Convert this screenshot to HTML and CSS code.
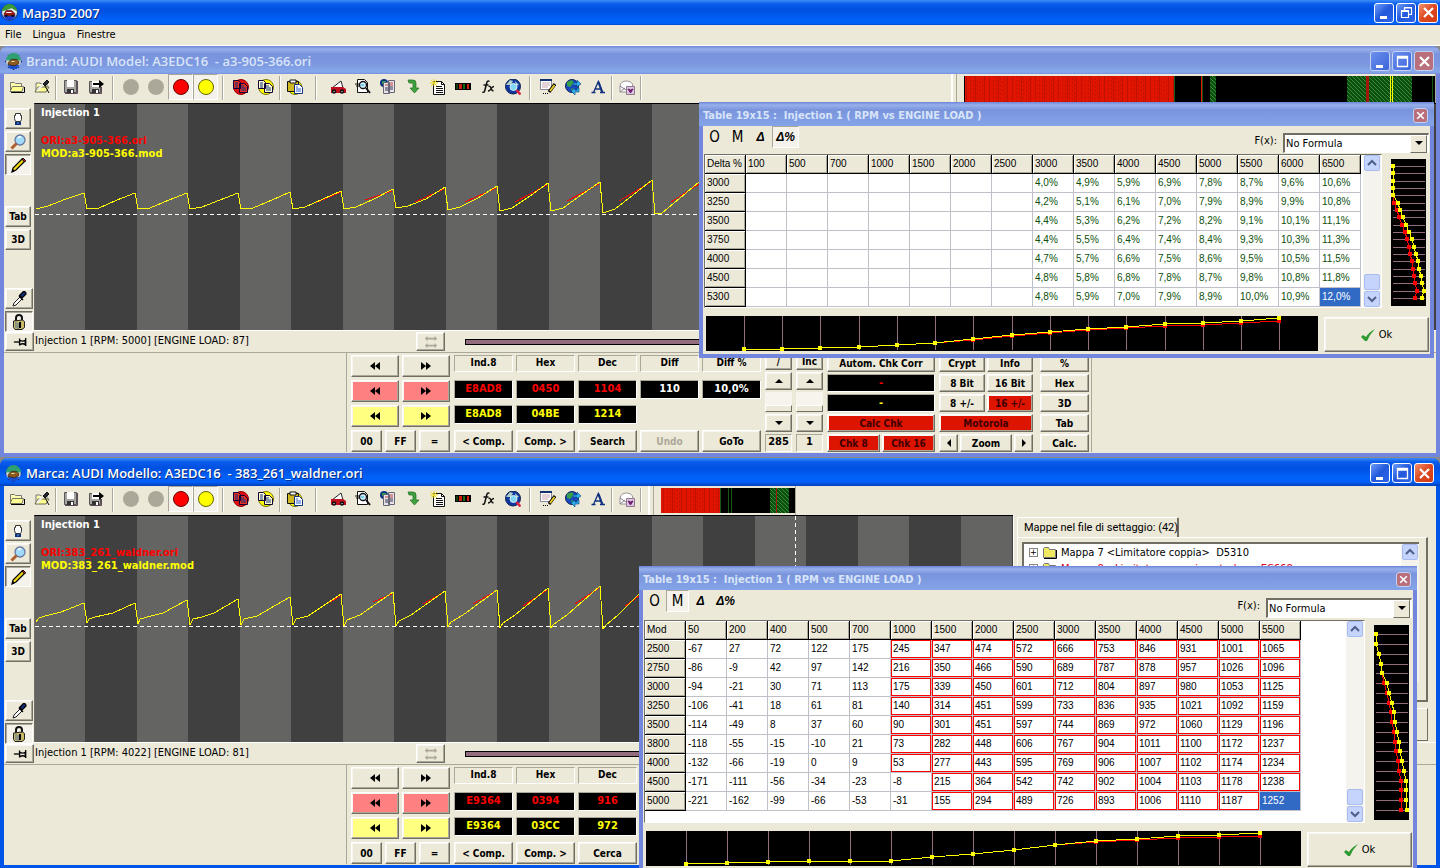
FILE: index.html
```html
<!DOCTYPE html>
<html lang="it">
<head>
    <meta charset="UTF-8">
    <meta name="viewport" content="width=device-width, initial-scale=1.0">
    <title>Map3D 2007</title>
    <link rel="stylesheet" href="styles.css">
</head>
<body>
    <!-- Shared icons -->
    <svg class="icon-defs" aria-hidden="true">
        <defs>
            <pattern id="redStripes" width="23" height="4" patternUnits="userSpaceOnUse">
                <rect width="23" height="4" fill="#e01400"/>
                <path d="M2.500 0v4M11.500 0v4M20.500 0v4" stroke="#c01200"/>
                <path d="M6.500 0v2M9.500 0v2M13.500 1v2M16.500 2v2M18.500 0v2" stroke="#c41400"/>
            </pattern>
            <pattern id="greenMesh" width="4" height="4" patternUnits="userSpaceOnUse">
                <rect width="4" height="4" fill="#0c5010"/>
                <path d="M0 0l4 4M2 -2l4 4M-2 2l4 4" stroke="#3a8a38"/>
            </pattern>
            <marker id="dotY" markerWidth="4" markerHeight="4" refX="2" refY="2" markerUnits="userSpaceOnUse"><rect width="4" height="4" fill="#ff0"/></marker>
            <marker id="dotR" markerWidth="4" markerHeight="4" refX="2" refY="2" markerUnits="userSpaceOnUse"><rect width="4" height="4" fill="#f00"/></marker>
        </defs>
        <symbol id="logo" viewBox="0 0 16 16">
            <circle cx="8" cy="8" r="7.5" fill="#e8eef4" stroke="#1b3c7c"/>
            <path d="M1 7a7 7 0 0 1 14 0l-5-3z" fill="#3a9a3a"/>
            <path d="M2 11h12l-3 4H5z" fill="#1a3fd0"/>
            <path d="M3 9l2-3h5l3 3v2H3z" fill="#a01818" stroke="#300" stroke-width=".6"/>
            <path d="M5 8h5" stroke="#fff"/>
            <path d="M4 11h2M10 11h2" stroke="#000" stroke-width="2"/>
        </symbol>
        <symbol id="logo-child" viewBox="0 0 16 16">
            <path d="M8 0v16M0 8h16M3 2l10 12M13 2L3 14" stroke="#1c2c6c" stroke-width="1.4"/>
            <circle cx="8" cy="8" r="6.8" fill="#e8e8e0"/>
            <path d="M1 7a7 7 0 0 1 14 0z" fill="#2fa070"/>
            <path d="M2 11h12l-3 4H5z" fill="#1a50d0"/>
            <path d="M3 9l3-3h5l2 2v2l-4 2-6-1z" fill="#8a5a20" stroke="#3a2008" stroke-width=".7"/>
            <path d="M6 8h3" stroke="#f0e0b0"/>
        </symbol>
        <symbol id="open" viewBox="0 0 16 16">
            <path d="M1.500 12V3.500h4l1 1h6v3" fill="#ffffb0" stroke="#777"/>
            <path d="M1 12.500l2.500-5h11l-1.500 5z" fill="#ffff90" stroke="#776"/>
            <path d="M15.500 8v5.500H2" stroke="#000" fill="none"/>
        </symbol>
        <symbol id="openedit" viewBox="0 0 16 16">
            <path d="M2 13V4h4l1 1h6v3" fill="#ffffb0" stroke="#777"/>
            <path d="M1 13l3-5h11l-3 5z" fill="#ffff90" stroke="#665"/>
            <path d="M3 12l7-8" stroke="#eee" stroke-width="2"/>
            <path d="M9 5l4-4 2 2-4 4zM11 7l4 7" stroke="#111" fill="#223"/>
        </symbol>
        <symbol id="save" viewBox="0 0 16 16">
            <path d="M1.500 1.500h12v12h-12z" fill="#a8a4a0" stroke="#555"/>
            <path d="M4 1h7v7H4z" fill="#fff"/>
            <path d="M4 10h7v4H4z" fill="#333"/><path d="M8 11h2v3H8z" fill="#fff"/>
            <path d="M14.500 2v12.500H2" stroke="#604858" fill="none"/>
        </symbol>
        <symbol id="saveas" viewBox="0 0 16 16">
            <path d="M1.500 2.500h11v11h-11z" fill="#a8a4a0" stroke="#555"/>
            <path d="M4 2h7v6H4z" fill="#fff"/>
            <path d="M4 10h7v4H4z" fill="#333"/><path d="M8 11h2v3H8z" fill="#fff"/>
            <path d="M13.500 8v6.500H2" stroke="#604858" fill="none"/>
            <path d="M5 4h6V1l5 4-5 4V6H5z" fill="#000"/>
        </symbol>
        <symbol id="gray" viewBox="0 0 16 16"><circle cx="8.500" cy="8.500" r="7.500" fill="#fff"/><circle cx="8" cy="8" r="8" fill="#aca899"/></symbol>
        <symbol id="red" viewBox="0 0 16 16"><circle cx="8" cy="8" r="7.500" fill="#f00" stroke="#600"/></symbol>
        <symbol id="yellow" viewBox="0 0 16 16"><circle cx="8" cy="8" r="7.500" fill="#ff0" stroke="#660"/></symbol>
        <symbol id="copyred" viewBox="0 0 16 16">
            <circle cx="8" cy="8" r="7.500" fill="#e01010" stroke="#900"/>
            <path d="M.5 1.500h5l2 2v6h-7zM6.500 4.500h5l3 3v6h-8z" fill="#e83020" stroke="#103"/>
            <path d="M2 4h3M2 6h3M2 8h3M8 7h3M8 9h5M8 11h5" stroke="#103080"/>
        </symbol>
        <symbol id="copyyellow" viewBox="0 0 16 16">
            <circle cx="8" cy="8" r="7.500" fill="#ff0" stroke="#770"/>
            <path d="M.5 1.500h5l2 2v6h-7zM6.500 4.500h5l3 3v6h-8z" fill="#ffffd0" stroke="#103"/>
            <path d="M2 4h3M2 6h3M2 8h3M8 7h3M8 9h5M8 11h5" stroke="#103080"/>
        </symbol>
        <symbol id="paste" viewBox="0 0 16 16">
            <circle cx="8" cy="8.500" r="7" fill="#ff0" stroke="#770"/>
            <path d="M.5 2.500h11v10H.5z" fill="#d0b820" stroke="#111"/>
            <path d="M3 1h6v3H3z" fill="#fff" stroke="#111"/>
            <path d="M7.500 5.500h5l3 3v6h-8z" fill="#fff" stroke="#103080"/>
            <path d="M9 8h2M9 10h5M9 12h5" stroke="#3060d0"/>
        </symbol>
        <symbol id="car" viewBox="0 0 16 16">
            <path d="M2 9l9-7 2 7z" fill="#fff" stroke="#222"/>
            <path d="M1 8h12l3 2v4H1z" fill="#c01020"/>
            <circle cx="4" cy="12.500" r="2.200" fill="#111"/><circle cx="12" cy="12.500" r="2.200" fill="#111"/>
            <path d="M3.500 12.500h1M11.500 12.500h1" stroke="#fff"/>
        </symbol>
        <symbol id="find" viewBox="0 0 16 16">
            <path d="M2.500.5h7l3 3v10h-10z" fill="#fff" stroke="#111"/>
            <path d="M0 5h5M1 7h4" stroke="#111"/>
            <circle cx="8" cy="6" r="3.500" fill="#d0f0ff" stroke="#111" stroke-width="1.300"/>
            <path d="M6 6h3" stroke="#20b0d0"/>
            <path d="M11 9l4 5" stroke="#111" stroke-width="2"/>
        </symbol>
        <symbol id="compare" viewBox="0 0 16 16">
            <circle cx="4" cy="4" r="4" fill="#103080"/><path d="M2 2h4v3H2z" fill="#20a050"/>
            <path d="M3.500 3.500h6v11h-6zM8.500 1.500h6v12h-6z" fill="#e8e4e8" stroke="#667"/>
            <path d="M10 4h3M10 6h3M5 6h3" stroke="#c04040"/><path d="M10 8h3M5 9h3M5 11h3M10 10h3" stroke="#335"/>
        </symbol>
        <symbol id="down" viewBox="0 0 16 16"><path d="M3 1h5q3 0 3 3v5h3l-4.500 5L5 9h3V5q0-1-1-1H4z" fill="#3fa03f" stroke="#1d701d" stroke-width=".7"/></symbol>
        <symbol id="newfile" viewBox="0 0 16 16">
            <path d="M3.500 2.500h8l3 3v10h-11z" fill="#fff" stroke="#111"/><path d="M11.500 2.500v3h3" stroke="#111" fill="none"/>
            <path d="M6 7.500h6M6 9.500h7M6 11.500h7M6 13.500h7" stroke="#111"/>
            <path d="M4 0v7M0 4h8M1 1l6 6M7 1L1 7" stroke="#e8d820"/>
        </symbol>
        <symbol id="strip" viewBox="0 0 16 16"><path d="M0 4h16v7H0z" fill="#000"/><path d="M1 5h2v5H1z" fill="#104010"/><path d="M4 5h3v5H4zM12 5h2v5h-2z" fill="#d02010"/><path d="M8 5h2v5H8z" fill="#107010"/></symbol>
        <symbol id="fx" viewBox="0 0 16 16">
            <path d="M9.500 2.500Q7.500 1 6.700 4L4.800 11.500Q4.200 14 2.500 13M3.500 6h5" fill="none" stroke="#111" stroke-width="1.500"/>
            <path d="M8.500 7.500q1.500-1 2.300 1.500t2.700 3M14 7.500q-2 0-3 2.300t-3 2.200" fill="none" stroke="#111" stroke-width="1.300"/>
        </symbol>
        <symbol id="globefind" viewBox="0 0 16 16">
            <circle cx="8" cy="7.500" r="7.500" fill="#1038a0" stroke="#102050"/>
            <path d="M1 6l4-5 3 1-2 4zM10 2l4 4-3 1z" fill="#b0d0c8"/>
            <circle cx="8.500" cy="8" r="3.500" fill="#80d8f8" stroke="#d8ecf8"/>
            <path d="M11.500 11l4 4.500" stroke="#e02040" stroke-width="2.500"/>
        </symbol>
        <symbol id="notes" viewBox="0 0 16 16">
            <path d="M.5.5h11v10H.5z" fill="#fff" stroke="#88889a"/><path d="M0 1h12" stroke="#103070" stroke-width="2"/>
            <path d="M2 4h8M2 6h8M2 8h6" stroke="#c8a8b0"/>
            <path d="M9 13l6-8" stroke="#000" stroke-width="3.200"/><path d="M10 12l4.500-6" stroke="#f0d020" stroke-width="1.800"/>
            <path d="M3 14.500h1M5 14.500h1M7 14.500h1" stroke="#000"/>
        </symbol>
        <symbol id="globe" viewBox="0 0 16 16">
            <circle cx="7" cy="7" r="6.500" fill="#1848c0" stroke="#102050"/>
            <path d="M2 3l5-2 2 3-4 4-3-1zM6 9l3 1-2 3z" fill="#38a048"/>
            <path d="M8 4h4V1l4 4-4 3V6H8zM14 9v4h-4v3l-4-4 4-3v2h2V9z" fill="#30b0e8" stroke="#084080" stroke-width=".6"/>
        </symbol>
        <symbol id="font" viewBox="0 0 16 16"><path d="M3.500 13.500L8.300 2.500L12.500 13.500M5 10h6M1.500 13.500h4M10 13.500h5" fill="none" stroke="#103080" stroke-width="1.300"/><path d="M8.500 3l3.800 10.500" stroke="#103080" stroke-width="2.200"/></symbol>
        <symbol id="mail" viewBox="0 0 16 16">
            <path d="M1 7q1-5 6.500-5T14 7v6H1z" fill="#fff" stroke="#99919a"/><path d="M1 7l6 4 7-4M1 13l5-4" stroke="#88808a" fill="none"/>
            <path d="M7.500 7.500h8v8h-8z" fill="#dcc4dc" stroke="#907890"/><path d="M9 10l2.500 4 2.500-4-2.500 1z" fill="#702070" stroke="#702070"/>
        </symbol>
        <symbol id="hand" viewBox="0 0 16 16"><path d="M4.500 4.500h1v-2h5v2h1v4l-1 2h-5l-1-3z" fill="#fff" stroke="#333"/><path d="M5 11h6v3H5z" fill="#103080"/><path d="M7 12h2" stroke="#60a0e0"/></symbol>
        <symbol id="magnify" viewBox="0 0 16 16"><circle cx="10" cy="6" r="5" fill="#a0dcfa" stroke="#6878a0" stroke-width="1.300"/><path d="M8 4q2-2 3-1" stroke="#fff" fill="none" stroke-width="1.500"/><path d="M6.500 9.500l-5 5" stroke="#b06030" stroke-width="3"/></symbol>
        <symbol id="pencil" viewBox="0 0 16 16"><path d="M2 15l1-4 9-9 3 2-9 9z" fill="#f0d818" stroke="#000" stroke-width="1.200"/><path d="M12 2l1-1 2.500 2.500-1 1.500z" fill="#e02020" stroke="#000"/><path d="M2 15l1-3 2 2z" fill="#000"/></symbol>
        <symbol id="dropper" viewBox="0 0 16 16"><path d="M2 15l1-3 6-6 2 2-6 6z" fill="#fff" stroke="#222"/><path d="M8 5l4 4M11 7l4-4q0-2.500-2.500-2.500l-4 4z" fill="#123080" stroke="#000" stroke-width="1.300"/></symbol>
        <symbol id="lock" viewBox="0 0 16 16"><path d="M5 8V4q0-3 3-3t3 3v3" fill="none" stroke="#111" stroke-width="2"/><path d="M2.500 7l9-1 2 1.500v6l-2.500 2h-7l-1.500-2z" fill="#c8b868" stroke="#222"/><path d="M5 8v6M7 9v6" stroke="#5070a0"/><path d="M9 8v6" stroke="#000" stroke-width="2"/></symbol>
        <symbol id="pin" viewBox="0 0 16 16"><path d="M1 8h6" stroke="#000" stroke-width="1.500"/><path d="M7.500 4v8M8 6q3 2 6 0V11q-3-2-6 0M14.500 3.500v9" fill="none" stroke="#000" stroke-width="1.500"/></symbol>
        <symbol id="swap" viewBox="0 0 16 16"><path d="M1 4l3-3v2h8V1l3 3-3 3V5H4v2zM1 12l3-3v2h8V9l3 3-3 3v-2H4v2z" fill="#aca899"/></symbol>
        <symbol id="prev" viewBox="0 0 10 8"><path d="M5 0v8L0 4zM10 0v8L5 4z"/></symbol>
        <symbol id="next" viewBox="0 0 10 8"><path d="M0 0v8l5-4zM5 0v8l5-4z"/></symbol>
        <symbol id="up" viewBox="0 0 8 8"><path d="M0 6h8L4 2z"/></symbol>
        <symbol id="dn" viewBox="0 0 8 8"><path d="M0 2h8L4 6z"/></symbol>
        <symbol id="lt" viewBox="0 0 8 8"><path d="M6 0v8L2 4z"/></symbol>
        <symbol id="rt" viewBox="0 0 8 8"><path d="M2 0v8l4-4z"/></symbol>
        <symbol id="chevup" viewBox="0 0 10 10"><path d="M1 7l4-4 4 4" fill="none" stroke="#4d6185" stroke-width="2"/></symbol>
        <symbol id="chevdn" viewBox="0 0 10 10"><path d="M1 3l4 4 4-4" fill="none" stroke="#4d6185" stroke-width="2"/></symbol>
        <symbol id="min" viewBox="0 0 15 15"><path d="M3 11h7v3H3z" fill="#fff"/></symbol>
        <symbol id="max" viewBox="0 0 15 15"><path d="M2.500 2.500h10v10h-10zM2 4h11" fill="none" stroke="#fff" stroke-width="1.300"/></symbol>
        <symbol id="restore" viewBox="0 0 15 15"><path d="M5.500 5V2.500h7v7H10M5 3h8M2.500 5.500h7v7h-7zM2 6.500h8" fill="none" stroke="#fff" stroke-width="1.200"/></symbol>
        <symbol id="close" viewBox="0 0 15 15"><path d="M3 3l9 9M12 3l-9 9" stroke="#fff" stroke-width="2.200"/></symbol>
        <symbol id="check" viewBox="0 0 14 14"><path d="M0 9l2-2 3 2Q8 4 14 1 9 6 6 13H4z" fill="#2f9a2f"/></symbol>
        <symbol id="folder" viewBox="0 0 16 13"><path d="M1.500 11.500v-9l1-1h4l1 2h6v8z" fill="#f0e860" stroke="#777"/><path d="M14.500 4v8.500H2" fill="none" stroke="#000"/></symbol>
    </svg>

    <div class="app">
        <div class="app-title">
            <svg class="icon"><use href="#logo"/></svg>
            <h1>Map3D 2007</h1>
            <button class="win-btn" aria-label="Minimize"><svg><use href="#min"/></svg></button>
            <button class="win-btn" aria-label="Restore"><svg><use href="#restore"/></svg></button>
            <button class="win-btn close" aria-label="Close"><svg><use href="#close"/></svg></button>
        </div>
        <div class="menu">
            <button>File</button>
            <button>Lingua</button>
            <button>Finestre</button>
        </div>

        <div class="desktop">
            <!-- First map window -->
            <div class="child inactive">
                <div class="child-title">
                    <svg class="icon"><use href="#logo-child"/></svg>
                    <h2>Brand: AUDI Model: A3EDC16&nbsp; - a3-905-366.ori</h2>
                    <button class="win-btn" aria-label="Minimize"><svg><use href="#min"/></svg></button>
                    <button class="win-btn" aria-label="Maximize"><svg><use href="#max"/></svg></button>
                    <button class="win-btn close" aria-label="Close"><svg><use href="#close"/></svg></button>
                </div>
                <div class="toolbar">
                    <button aria-label="Open"><svg><use href="#open"/></svg></button>
                    <button aria-label="Open and edit"><svg><use href="#openedit"/></svg></button>
                    <span class="sep"></span>
                    <button aria-label="Save"><svg><use href="#save"/></svg></button>
                    <button aria-label="Save as"><svg><use href="#saveas"/></svg></button>
                    <span class="sep mid"></span>
                    <button aria-label="Undo all" disabled><svg><use href="#gray"/></svg></button>
                    <button aria-label="Redo all" disabled><svg><use href="#gray"/></svg></button>
                    <button class="down" aria-label="Show original"><svg><use href="#red"/></svg></button>
                    <button class="down" aria-label="Show modified"><svg><use href="#yellow"/></svg></button>
                    <span class="sep mid"></span>
                    <button aria-label="Copy original"><svg><use href="#copyred"/></svg></button>
                    <button aria-label="Copy modified"><svg><use href="#copyyellow"/></svg></button>
                    <span class="sep"></span>
                    <button aria-label="Paste"><svg><use href="#paste"/></svg></button>
                    <span class="sep wide"></span>
                    <button aria-label="Vehicle"><svg><use href="#car"/></svg></button>
                    <button aria-label="Find"><svg><use href="#find"/></svg></button>
                    <button aria-label="Compare"><svg><use href="#compare"/></svg></button>
                    <button aria-label="Import"><svg><use href="#down"/></svg></button>
                    <button aria-label="New map"><svg><use href="#newfile"/></svg></button>
                    <button aria-label="Overview strip"><svg><use href="#strip"/></svg></button>
                    <button aria-label="Formula"><svg><use href="#fx"/></svg></button>
                    <button aria-label="Search online"><svg><use href="#globefind"/></svg></button>
                    <span class="sep mid"></span>
                    <button aria-label="Notes"><svg><use href="#notes"/></svg></button>
                    <button aria-label="Update"><svg><use href="#globe"/></svg></button>
                    <button aria-label="Font"><svg><use href="#font"/></svg></button>
                    <span class="sep"></span>
                    <button aria-label="Mail"><svg><use href="#mail"/></svg></button>
                    <span class="sep"></span>
                    <div class="overview push">
                        <svg width="471" height="27">
                            <rect width="471" height="27"/>
                            <rect x="1" width="209" height="27" fill="url(#redStripes)"/>
                            <rect x="246" width="6" height="27" fill="url(#greenMesh)"/>
                            <rect x="383" width="65" height="27" fill="url(#greenMesh)"/>
                            <rect x="402" width="3" height="27" fill="#a01808"/>
                            <path d="M210.500 0v27M238.500 0v27M468.500 0v27" stroke="#145a14"/>
                            <path d="M237.500 0v27" stroke="#e01400"/>
                            <path d="M426.500 0v27M428.500 0v27" stroke="#ff0"/>
                        </svg>
                    </div>
                </div>
                <div class="work">
                    <div class="side">
                        <button aria-label="Hand"><svg><use href="#hand"/></svg></button>
                        <button aria-label="Zoom"><svg><use href="#magnify"/></svg></button>
                        <button class="pressed" aria-label="Edit"><svg><use href="#pencil"/></svg></button>
                        <button class="group">Tab</button>
                        <button>3D</button>
                        <button class="group long" aria-label="Pick"><svg><use href="#dropper"/></svg></button>
                        <button class="pressed long" aria-label="Lock"><svg><use href="#lock"/></svg></button>
                    </div>
                    <div class="graph">
                        <svg class="plot">
                            <path class="zero" d="M0 110.500H1400"/>
                            <path class="ori" d="M280 99L306 88M330 96L357 87M380 98L409 85M430 98L461 84M480 98L512 81M532 97L564 80M584 97L616 78M636 98L664 80"/>
                            <path class="mod" d="M1 105L13 102L31 95L49 89L52 105L64 104L82 96L100 89L103 105L115 104L134 96L152 89L155 105L167 103L185 96L203 89L206 105L218 104L237 96L255 88L258 105L270 103L288 95L306 87L309 105L321 103L339 95L358 85L361 104L373 102L391 95L410 83L413 106L425 103L443 94L462 82L465 107L477 104L495 92L513 79L516 107L528 104L546 91L565 78L568 109L580 105L598 91L617 76L620 110L627 109L645 94L664 78L680 76"/>
                        </svg>
                        <div class="legend">
                            <p>Injection 1</p>
                            <p class="ori-name">ORI:a3-905-366.ori</p>
                            <p class="mod-name">MOD:a3-905-366.mod</p>
                        </div>
                    </div>
                </div>
                <div class="status">
                    <button aria-label="Pin"><svg><use href="#pin"/></svg></button>
                    <p>Injection 1 [RPM: 5000] [ENGINE LOAD: 87]</p>
                    <button aria-label="Swap" disabled><svg><use href="#swap"/></svg></button>
                    <div class="position"></div>
                </div>
                <div class="controls">
                    <div class="blank"></div>
                    <div class="nav">
                        <button aria-label="Back"><svg><use href="#prev"/></svg></button>
                        <button aria-label="Forward"><svg><use href="#next"/></svg></button>
                        <button class="pink" aria-label="Back original"><svg><use href="#prev"/></svg></button>
                        <button class="pink" aria-label="Forward original"><svg><use href="#next"/></svg></button>
                        <button class="lemon" aria-label="Back modified"><svg><use href="#prev"/></svg></button>
                        <button class="lemon" aria-label="Forward modified"><svg><use href="#next"/></svg></button>
                        <div class="fill"><button>00</button><button>FF</button><button>=</button></div>
                    </div>
                    <div class="values">
                        <span class="head">Ind.8</span><span class="head">Hex</span><span class="head">Dec</span><span class="head">Diff</span><span class="head">Diff %</span>
                        <output class="red">E8AD8</output><output class="red">0450</output><output class="red">1104</output><output>110</output><output>10,0%</output>
                        <output class="yellow">E8AD8</output><output class="yellow">04BE</output><output class="yellow">1214</output><i></i><i></i>
                        <button>&lt; Comp.</button><button>Comp. &gt;</button><button>Search</button><button disabled>Undo</button><button>GoTo</button>
                    </div>
                    <div class="spin">
                        <button>/</button>
                        <button aria-label="Up"><svg><use href="#up"/></svg></button>
                        <div class="track"><span></span></div>
                        <button aria-label="Down"><svg><use href="#dn"/></svg></button>
                        <output>285</output>
                    </div>
                    <div class="spin">
                        <button>Inc</button>
                        <button aria-label="Up"><svg><use href="#up"/></svg></button>
                        <div class="track"><span></span></div>
                        <button aria-label="Down"><svg><use href="#dn"/></svg></button>
                        <output>1</output>
                    </div>
                    <div class="keys chk">
                        <button class="full">Autom. Chk Corr</button>
                        <output class="full red">-</output>
                        <output class="full yellow">-</output>
                        <button class="full hot">Calc Chk</button>
                        <button class="hot">Chk 8</button><button class="hot">Chk 16</button>
                    </div>
                    <div class="keys bits">
                        <button>Crypt</button><button>Info</button>
                        <button>8 Bit</button><button>16 Bit</button>
                        <button>8 +/-</button><button class="hot">16 +/-</button>
                        <button class="full hot">Motorola</button>
                        <div class="full zoom">
                            <button aria-label="Zoom out"><svg><use href="#lt"/></svg></button>
                            <button>Zoom</button>
                            <button aria-label="Zoom in"><svg><use href="#rt"/></svg></button>
                        </div>
                    </div>
                    <div class="keys last">
                        <button>%</button>
                        <button>Hex</button>
                        <button>3D</button>
                        <button>Tab</button>
                        <button>Calc.</button>
                    </div>
                </div>

                <!-- Map table, percent view -->
                <div class="dialog first">
                    <div class="dialog-title">
                        <h3>Table 19x15 :&nbsp; Injection 1 ( RPM vs ENGINE LOAD )</h3>
                        <button class="win-btn small close" aria-label="Close"><svg><use href="#close"/></svg></button>
                    </div>
                    <div class="dialog-tools">
                        <button>O</button>
                        <button>M</button>
                        <button><em>&Delta;</em></button>
                        <button class="down"><em>&Delta;%</em></button>
                        <label for="formula1">F(x):</label>
                        <div class="combo">
                            <select id="formula1"><option>No Formula</option></select>
                        </div>
                    </div>
                    <div class="dialog-row">
                        <div class="grid">
                            <table class="percent">
                                <thead>
                                    <tr><th>Delta %</th><th>100</th><th>500</th><th>700</th><th>1000</th><th>1500</th><th>2000</th><th>2500</th><th>3000</th><th>3500</th><th>4000</th><th>4500</th><th>5000</th><th>5500</th><th>6000</th><th>6500</th></tr>
                                </thead>
                                <tbody>
                                    <tr><th>3000</th><td></td><td></td><td></td><td></td><td></td><td></td><td></td><td>4,0%</td><td>4,9%</td><td>5,9%</td><td>6,9%</td><td>7,8%</td><td>8,7%</td><td>9,6%</td><td>10,6%</td></tr>
                                    <tr><th>3250</th><td></td><td></td><td></td><td></td><td></td><td></td><td></td><td>4,2%</td><td>5,1%</td><td>6,1%</td><td>7,0%</td><td>7,9%</td><td>8,9%</td><td>9,9%</td><td>10,8%</td></tr>
                                    <tr><th>3500</th><td></td><td></td><td></td><td></td><td></td><td></td><td></td><td>4,4%</td><td>5,3%</td><td>6,2%</td><td>7,2%</td><td>8,2%</td><td>9,1%</td><td>10,1%</td><td>11,1%</td></tr>
                                    <tr><th>3750</th><td></td><td></td><td></td><td></td><td></td><td></td><td></td><td>4,4%</td><td>5,5%</td><td>6,4%</td><td>7,4%</td><td>8,4%</td><td>9,3%</td><td>10,3%</td><td>11,3%</td></tr>
                                    <tr><th>4000</th><td></td><td></td><td></td><td></td><td></td><td></td><td></td><td>4,7%</td><td>5,7%</td><td>6,6%</td><td>7,5%</td><td>8,6%</td><td>9,5%</td><td>10,5%</td><td>11,5%</td></tr>
                                    <tr><th>4500</th><td></td><td></td><td></td><td></td><td></td><td></td><td></td><td>4,8%</td><td>5,8%</td><td>6,8%</td><td>7,8%</td><td>8,7%</td><td>9,8%</td><td>10,8%</td><td>11,8%</td></tr>
                                    <tr><th>5300</th><td></td><td></td><td></td><td></td><td></td><td></td><td></td><td>4,8%</td><td>5,9%</td><td>7,0%</td><td>7,9%</td><td>8,9%</td><td>10,0%</td><td>10,9%</td><td class="sel">12,0%</td></tr>
                                </tbody>
                            </table>
                            <div class="scroll">
                                <button aria-label="Scroll up"><svg><use href="#chevup"/></svg></button>
                                <span></span>
                                <button aria-label="Scroll down"><svg><use href="#chevdn"/></svg></button>
                            </div>
                        </div>
                        <svg class="section" width="35" height="147">
                            <path class="rule" d="M2 7.500h32M2 14.500h32M2 22.500h32M2 29.500h32M2 36.500h32M2 44.500h32M2 51.500h32M2 58.500h32M2 66.500h32M2 73.500h32M2 80.500h32M2 88.500h32M2 95.500h32M2 102.500h32M2 110.500h32M2 117.500h32M2 124.500h32M2 132.500h32M2 139.500h32"/>
                            <polyline class="line-r" points="2,7 2,14 2,22 2,29 2,36 3,44 6,51 8,58 11,66 14,73 16,80 18,88 19,95 21,102 22,110 23,117 24,124 26,132 24,139"/>
                            <polyline class="line-y" points="2,7 2,14 2,22 2,29 2,36 7,44 9,51 12,58 15,66 18,73 21,80 23,88 25,95 27,102 28,110 30,117 31,124 33,132 31,139"/>
                        </svg>
                    </div>
                    <div class="dialog-row bottom">
                        <svg class="section" width="612" height="35">
                            <path class="rule" d="M38.500 0v34M76.500 0v34M114.500 0v34M153.500 0v34M191.500 0v34M229.500 0v34M267.500 0v34M306.500 0v34M344.500 0v34M382.500 0v34M420.500 0v34M459.500 0v34M497.500 0v34M535.500 0v34M573.500 0v34"/>
                            <polyline class="line-r" points="229,27 267,24 306,20 344,17 382,14 420,12 459,10 497,9 535,7 573,5"/>
                            <polyline class="line-y" points="38,33 76,33 114,32 153,31 191,29 229,27 267,23 306,19 344,16 382,13 420,11 459,8 497,7 535,5 573,2"/>
                        </svg>
                        <button class="ok"><svg><use href="#check"/></svg>Ok</button>
                    </div>
                </div>
            </div>

            <!-- Second map window -->
            <div class="child">
                <div class="child-title">
                    <svg class="icon"><use href="#logo-child"/></svg>
                    <h2>Marca: AUDI Modello: A3EDC16&nbsp; - 383_261_waldner.ori</h2>
                    <button class="win-btn" aria-label="Minimize"><svg><use href="#min"/></svg></button>
                    <button class="win-btn" aria-label="Maximize"><svg><use href="#max"/></svg></button>
                    <button class="win-btn close" aria-label="Close"><svg><use href="#close"/></svg></button>
                </div>
                <div class="toolbar">
                    <button aria-label="Open"><svg><use href="#open"/></svg></button>
                    <button aria-label="Open and edit"><svg><use href="#openedit"/></svg></button>
                    <span class="sep"></span>
                    <button aria-label="Save"><svg><use href="#save"/></svg></button>
                    <button aria-label="Save as"><svg><use href="#saveas"/></svg></button>
                    <span class="sep mid"></span>
                    <button aria-label="Undo all" disabled><svg><use href="#gray"/></svg></button>
                    <button aria-label="Redo all" disabled><svg><use href="#gray"/></svg></button>
                    <button class="down" aria-label="Show original"><svg><use href="#red"/></svg></button>
                    <button class="down" aria-label="Show modified"><svg><use href="#yellow"/></svg></button>
                    <span class="sep mid"></span>
                    <button aria-label="Copy original"><svg><use href="#copyred"/></svg></button>
                    <button aria-label="Copy modified"><svg><use href="#copyyellow"/></svg></button>
                    <span class="sep"></span>
                    <button aria-label="Paste"><svg><use href="#paste"/></svg></button>
                    <span class="sep wide"></span>
                    <button aria-label="Vehicle"><svg><use href="#car"/></svg></button>
                    <button aria-label="Find"><svg><use href="#find"/></svg></button>
                    <button aria-label="Compare"><svg><use href="#compare"/></svg></button>
                    <button aria-label="Import"><svg><use href="#down"/></svg></button>
                    <button aria-label="New map"><svg><use href="#newfile"/></svg></button>
                    <button aria-label="Overview strip"><svg><use href="#strip"/></svg></button>
                    <button aria-label="Formula"><svg><use href="#fx"/></svg></button>
                    <button aria-label="Search online"><svg><use href="#globefind"/></svg></button>
                    <span class="sep mid"></span>
                    <button aria-label="Notes"><svg><use href="#notes"/></svg></button>
                    <button aria-label="Update"><svg><use href="#globe"/></svg></button>
                    <button aria-label="Font"><svg><use href="#font"/></svg></button>
                    <span class="sep"></span>
                    <button aria-label="Mail"><svg><use href="#mail"/></svg></button>
                    <span class="sep"></span>
                    <div class="overview">
                        <svg width="134" height="25">
                            <rect width="134" height="25"/>
                            <rect width="59" height="25" fill="url(#redStripes)"/>
                            <rect x="109" width="19" height="25" fill="url(#greenMesh)"/>
                            <path d="M59.500 0v25M67.500 0v25M70.500 0v25" stroke="#145a14"/>
                            <path d="M115.500 0v25" stroke="#a01808"/>
                        </svg>
                    </div>
                </div>
                <div class="work">
                    <div class="side">
                        <button aria-label="Hand"><svg><use href="#hand"/></svg></button>
                        <button aria-label="Zoom"><svg><use href="#magnify"/></svg></button>
                        <button class="pressed" aria-label="Edit"><svg><use href="#pencil"/></svg></button>
                        <button class="group">Tab</button>
                        <button>3D</button>
                        <button class="group long" aria-label="Pick"><svg><use href="#dropper"/></svg></button>
                        <button class="pressed long" aria-label="Lock"><svg><use href="#lock"/></svg></button>
                    </div>
                    <div class="graph">
                        <svg class="plot">
                            <path class="zero" d="M0 110.500H1400M760.500 0V110"/>
                            <path class="ori" d="M293 87L306 80M338 86L357 78M388 88L409 76M438 88L461 75M488 90L512 74M540 88L564 72M590 90L604 80"/>
                            <path class="mod" d="M1 106L4 102L10 100L26 96L49 87L52 107L54 103L60 101L78 97L100 87L103 108L105 103L116 100L128 97L152 84L155 109L158 103L167 101L179 97L203 83L206 109L209 103L222 100L255 81L258 109L261 103L273 100L306 78L309 110L312 104L325 99L358 76L361 110L364 105L376 99L410 75L413 111L416 106L428 99L462 74L465 112L468 107L480 99L513 72L516 112L519 108L532 99L565 70L568 113L571 109L583 99L604 78L616 74"/>
                        </svg>
                        <div class="legend">
                            <p>Injection 1</p>
                            <p class="ori-name">ORI:383_261_waldner.ori</p>
                            <p class="mod-name">MOD:383_261_waldner.mod</p>
                        </div>
                    </div>
                    <div class="maps">
                        <div class="tab">Mappe nel file di settaggio: (42)</div>
                        <div class="page">
                            <ul class="tree">
                                <li><span class="plus">+</span><svg><use href="#folder"/></svg>Mappa 7 &lt;Limitatore coppia&gt;&nbsp; D5310</li>
                                <li class="changed"><span class="plus">+</span><svg><use href="#folder"/></svg>Mappa 8 &lt;Limitatore pressione turbo&gt;&nbsp; EC668</li>
                            </ul>
                            <div class="scroll">
                                <button aria-label="Scroll up"><svg><use href="#chevup"/></svg></button>
                            </div>
                        </div>
                        <div class="box"></div>
                    </div>
                </div>
                <div class="status">
                    <button aria-label="Pin"><svg><use href="#pin"/></svg></button>
                    <p>Injection 1 [RPM: 4022] [ENGINE LOAD: 81]</p>
                    <button aria-label="Swap" disabled><svg><use href="#swap"/></svg></button>
                    <div class="position"></div>
                </div>
                <div class="controls">
                    <div class="blank"></div>
                    <div class="nav">
                        <button aria-label="Back"><svg><use href="#prev"/></svg></button>
                        <button aria-label="Forward"><svg><use href="#next"/></svg></button>
                        <button class="pink" aria-label="Back original"><svg><use href="#prev"/></svg></button>
                        <button class="pink" aria-label="Forward original"><svg><use href="#next"/></svg></button>
                        <button class="lemon" aria-label="Back modified"><svg><use href="#prev"/></svg></button>
                        <button class="lemon" aria-label="Forward modified"><svg><use href="#next"/></svg></button>
                        <div class="fill"><button>00</button><button>FF</button><button>=</button></div>
                    </div>
                    <div class="values three">
                        <span class="head">Ind.8</span><span class="head">Hex</span><span class="head">Dec</span>
                        <output class="red">E9364</output><output class="red">0394</output><output class="red">916</output>
                        <output class="yellow">E9364</output><output class="yellow">03CC</output><output class="yellow">972</output>
                        <button>&lt; Comp.</button><button>Comp. &gt;</button><button>Cerca</button>
                    </div>
                </div>

                <!-- Map table, modified values -->
                <div class="dialog second">
                    <div class="dialog-title">
                        <h3>Table 19x15 :&nbsp; Injection 1 ( RPM vs ENGINE LOAD )</h3>
                        <button class="win-btn small close" aria-label="Close"><svg><use href="#close"/></svg></button>
                    </div>
                    <div class="dialog-tools">
                        <button>O</button>
                        <button class="down">M</button>
                        <button><em>&Delta;</em></button>
                        <button><em>&Delta;%</em></button>
                        <label for="formula2">F(x):</label>
                        <div class="combo">
                            <select id="formula2"><option>No Formula</option></select>
                        </div>
                    </div>
                    <div class="dialog-row">
                        <div class="grid">
                            <table>
                                <thead>
                                    <tr><th>Mod</th><th>50</th><th>200</th><th>400</th><th>500</th><th>700</th><th>1000</th><th>1500</th><th>2000</th><th>2500</th><th>3000</th><th>3500</th><th>4000</th><th>4500</th><th>5000</th><th>5500</th></tr>
                                </thead>
                                <tbody>
                                    <tr><th>2500</th><td>-67</td><td>27</td><td>72</td><td>122</td><td>175</td><td class="m">245</td><td class="m">347</td><td class="m">474</td><td class="m">572</td><td class="m">666</td><td class="m">753</td><td class="m">846</td><td class="m">931</td><td class="m">1001</td><td class="m">1065</td></tr>
                                    <tr><th>2750</th><td>-86</td><td>-9</td><td>42</td><td>97</td><td>142</td><td class="m">216</td><td class="m">350</td><td class="m">466</td><td class="m">590</td><td class="m">689</td><td class="m">787</td><td class="m">878</td><td class="m">957</td><td class="m">1026</td><td class="m">1096</td></tr>
                                    <tr><th>3000</th><td>-94</td><td>-21</td><td>30</td><td>71</td><td>113</td><td class="m">175</td><td class="m">339</td><td class="m">450</td><td class="m">601</td><td class="m">712</td><td class="m">804</td><td class="m">897</td><td class="m">980</td><td class="m">1053</td><td class="m">1125</td></tr>
                                    <tr><th>3250</th><td>-106</td><td>-41</td><td>18</td><td>61</td><td>81</td><td class="m">140</td><td class="m">314</td><td class="m">451</td><td class="m">599</td><td class="m">733</td><td class="m">836</td><td class="m">935</td><td class="m">1021</td><td class="m">1092</td><td class="m">1159</td></tr>
                                    <tr><th>3500</th><td>-114</td><td>-49</td><td>8</td><td>37</td><td>60</td><td class="m">90</td><td class="m">301</td><td class="m">451</td><td class="m">597</td><td class="m">744</td><td class="m">869</td><td class="m">972</td><td class="m">1060</td><td class="m">1129</td><td class="m">1196</td></tr>
                                    <tr><th>3800</th><td>-118</td><td>-55</td><td>-15</td><td>-10</td><td>21</td><td class="m">73</td><td class="m">282</td><td class="m">448</td><td class="m">606</td><td class="m">767</td><td class="m">904</td><td class="m">1011</td><td class="m">1100</td><td class="m">1172</td><td class="m">1237</td></tr>
                                    <tr><th>4000</th><td>-132</td><td>-66</td><td>-19</td><td>0</td><td>9</td><td class="m">53</td><td class="m">277</td><td class="m">443</td><td class="m">595</td><td class="m">769</td><td class="m">906</td><td class="m">1007</td><td class="m">1102</td><td class="m">1174</td><td class="m">1234</td></tr>
                                    <tr><th>4500</th><td>-171</td><td>-111</td><td>-56</td><td>-34</td><td>-23</td><td>-8</td><td class="m">215</td><td class="m">364</td><td class="m">542</td><td class="m">742</td><td class="m">902</td><td class="m">1004</td><td class="m">1103</td><td class="m">1178</td><td class="m">1238</td></tr>
                                    <tr><th>5000</th><td>-221</td><td>-162</td><td>-99</td><td>-66</td><td>-53</td><td>-31</td><td class="m">155</td><td class="m">294</td><td class="m">489</td><td class="m">726</td><td class="m">893</td><td class="m">1006</td><td class="m">1110</td><td class="m">1187</td><td class="sel">1252</td></tr>
                                </tbody>
                            </table>
                            <div class="scroll">
                                <button aria-label="Scroll up"><svg><use href="#chevup"/></svg></button>
                                <span></span>
                                <button aria-label="Scroll down"><svg><use href="#chevdn"/></svg></button>
                            </div>
                        </div>
                        <svg class="section" width="35" height="195">
                            <path class="rule" d="M2 9.500h32M2 19.500h32M2 29.500h32M2 39.500h32M2 48.500h32M2 58.500h32M2 68.500h32M2 78.500h32M2 87.500h32M2 97.500h32M2 107.500h32M2 117.500h32M2 126.500h32M2 136.500h32M2 146.500h32M2 156.500h32M2 165.500h32M2 175.500h32M2 185.500h32"/>
                            <polyline class="line-r" points="2,9 2,19 5,29 7,39 8,48 10,58 13,68 15,78 17,87 18,97 20,107 21,117 22,126 24,136 25,146 27,156 27,165 27,175 27,185"/>
                            <polyline class="line-y" points="2,9 2,19 5,29 7,39 8,48 13,58 15,68 18,78 20,87 21,97 23,107 25,117 26,126 28,136 30,146 32,156 32,165 32,175 33,185"/>
                        </svg>
                    </div>
                    <div class="dialog-row bottom">
                        <svg class="section" width="655" height="35">
                            <path class="rule" d="M40.500 0v34M81.500 0v34M122.500 0v34M163.500 0v34M204.500 0v34M245.500 0v34M286.500 0v34M327.500 0v34M368.500 0v34M409.500 0v34M450.500 0v34M491.500 0v34M532.500 0v34M573.500 0v34M614.500 0v34"/>
                            <polyline class="line-r" points="368,19 409,14 450,11 491,9 532,7 573,6 614,5"/>
                            <polyline class="line-y" points="40,33 81,32 122,31 163,30 204,30 245,30 286,26 327,23 368,19 409,14 450,10 491,8 532,5 573,4 614,2"/>
                        </svg>
                        <button class="ok"><svg><use href="#check"/></svg>Ok</button>
                    </div>
                </div>
            </div>
        </div>
    </div>
</body>
</html>
```
FILE: styles.css
```css
body, html {
    margin: 0;
    padding: 0;
    height: 100%;
    overflow: hidden;
}
* {
    box-sizing: border-box;
}
body {
    background-color: #ece9d8;
    font-family: "DejaVu Sans Condensed", "DejaVu Sans", sans-serif;
    font-size: 11px;
    color: black;
}
h1, h2, h3, p, ul {
    margin: 0;
    padding: 0;
    font-weight: inherit;
}
button {
    font: inherit;
    color: inherit;
    padding: 0;
    margin: 0;
    border: none;
    background: none;
    display: flex;
    align-items: center;
    justify-content: center;
    white-space: nowrap;
}
svg {
    display: block;
    flex: none;
}
.icon-defs {
    position: absolute;
    width: 0;
    height: 0;
}
.app {
    height: 100vh;
    overflow: hidden;
}

/* Title bars */
.app-title, .child-title {
    display: flex;
    align-items: center;
    gap: 2px;
    color: white;
    background: linear-gradient(#3c8cf8 0, #0a5cec 4px, #0050e0 10px, #0062fa 20px, #0060f8 24px, #0040b8);
}
.app-title {
    height: 25px;
    padding: 0 2px 0 1px;
}
.icon {
    width: 17px;
    height: 17px;
}
.app-title h1, .child-title h2 {
    flex: 1;
    font-family: "Open Sans", sans-serif;
    font-size: 13px;
    font-weight: 600;
    padding-left: 2px;
    text-shadow: 1px 1px #0a2a80;
    white-space: nowrap;
}
.win-btn {
    width: 20px;
    height: 20px;
    border: 1px solid white;
    border-radius: 3px;
    background: linear-gradient(135deg, #6c9cf8, #2258dc 50%, #2c64e8);
}
.win-btn svg {
    width: 15px;
    height: 15px;
}
.win-btn.close {
    background: linear-gradient(135deg, #f0906c, #dc4820 50%, #d03c14);
}
.win-btn.small {
    width: 15px;
    height: 15px;
}
.win-btn.small svg {
    width: 11px;
    height: 11px;
}
.inactive > .child-title .win-btn, .dialog-title .win-btn {
    border-color: #c4d2f4;
    background: linear-gradient(135deg, #6c90ec, #3c64dc);
}
.inactive > .child-title .win-btn.close, .dialog-title .win-btn.close {
    background: #b8707c;
}

.menu {
    display: flex;
    height: 21px;
    border-bottom: 1px solid white;
}
.menu button {
    padding: 0 5px;
    margin-right: 1px;
    height: 18px;
}

/* Child windows */
.desktop {
    display: flex;
    flex-direction: column;
    gap: 1px;
    background-color: #8a8a88;
}
.child {
    position: relative;
    border: solid #0054e8;
    border-width: 0 4px 4px;
    border-radius: 8px 8px 0 0;
    background-color: #ece9d8;
}
.child.inactive {
    border-color: #7186dc;
}
.child-title {
    height: 28px;
    margin: 0 -4px;
    padding: 2px 6px 0 5px;
    border-radius: 8px 8px 0 0;
}
.inactive > .child-title {
    background: linear-gradient(#6c84d8 0, #98b0ec 3px, #7a94dc 8px, #7c98e0 18px, #88a8ec 26px, #7890dc);
}
.inactive > .child-title h2 {
    color: #d8e4f8;
    text-shadow: none;
}

/* Toolbar */
.toolbar {
    display: flex;
    height: 29px;
    align-items: flex-start;
}
.toolbar button {
    width: 25px;
    height: 26px;
    flex: none;
}
.toolbar button svg {
    width: 16px;
    height: 16px;
}
.toolbar .down, .dialog-tools .down {
    background-color: #f4f2ea;
    border: 1px solid;
    border-color: #aca899 white white #aca899;
}
.sep {
    flex: none;
    width: 2px;
    height: 24px;
    margin: 2px 1px 0;
    border-left: 1px solid #aca899;
    border-right: 1px solid white;
}
.sep.mid {
    margin: 2px 4px 0;
}
.sep.wide {
    margin: 2px 8px 0;
}
.overview {
    flex: none;
    display: flex;
    height: 29px;
    margin-left: 5px;
    padding: 2px 0 0 11px;
    border-left: 2px solid white;
    border-right: 1px solid #aca899;
    overflow: hidden;
    background: linear-gradient(90deg, transparent 3px, #aca899 3px 4px, transparent 4px);
}
.overview.push {
    margin-left: auto;
}

/* Graph area */
.work {
    display: flex;
    height: 227px;
}
.side {
    width: 30px;
    padding: 5px 0 0 1px;
    display: flex;
    flex-direction: column;
    gap: 2px;
    font-weight: bold;
    font-size: 10px;
}
.side button, .status button, .nav button, .values button, .spin button, .keys button, .ok {
    border: 1px solid;
    border-color: white #716f64 #716f64 white;
    box-shadow: inset -1px -1px #aca899, inset 1px 1px #f8f6ee;
    background-color: #ece9d8;
}
.side button {
    width: 26px;
    height: 21px;
    flex: none;
}
.side button svg {
    width: 16px;
    height: 16px;
}
.side .pressed {
    border-color: #716f64 white white #716f64;
    box-shadow: inset 1px 1px #aca899;
    background-color: #f4f2ea;
}
.side .group {
    margin-top: 29px;
}
.side .group.long {
    margin-top: 36px;
}
.side .long {
    width: 28px;
}
.graph {
    flex: 1;
    position: relative;
    overflow: hidden;
    border-left: 1px solid #716f64;
    border-top: 1px solid black;
    background: repeating-linear-gradient(90deg, #646462 0 50px, #404040 50px 102px, #646462 102px 103px);
}
.plot {
    position: absolute;
    left: 0;
    top: 0;
    width: 100%;
    height: 100%;
}
.plot path {
    fill: none;
    shape-rendering: crispEdges;
}
.plot .zero {
    stroke: white;
    stroke-dasharray: 4 3;
}
.plot .ori {
    stroke: red;
}
.plot .mod {
    stroke: yellow;
}
.legend {
    position: relative;
    padding: 2px 0 0 6px;
    color: white;
    font-weight: bold;
    line-height: 13px;
}
.legend .ori-name {
    color: red;
    margin-top: 15px;
}
.legend .mod-name {
    color: yellow;
}

/* List of maps beside the graph */
.maps {
    width: 423px;
    padding: 2px 8px 0 3px;
    display: flex;
    flex-direction: column;
    border-left: 1px solid white;
}
.tab {
    width: 162px;
    height: 20px;
    line-height: 19px;
    padding-left: 6px;
    border: solid;
    border-width: 1px 2px 0 1px;
    border-color: white #716f64 white white;
    border-radius: 2px 2px 0 0;
    font-family: Roboto, sans-serif;
    white-space: nowrap;
}
.page {
    display: flex;
    height: 165px;
    padding: 4px 7px 0 4px;
    border: solid;
    border-width: 1px 2px 2px 1px;
    border-color: white #716f64 #716f64 white;
}
.tree {
    flex: 1;
    height: 140px;
    padding-left: 5px;
    list-style: none;
    background-color: white;
    border: solid #716f64;
    border-width: 2px 0 0 2px;
    overflow: hidden;
}
.tree li {
    display: flex;
    align-items: center;
    height: 16px;
}
.tree .changed {
    color: #e00020;
}
.tree svg {
    width: 16px;
    height: 13px;
    margin: 0 3px 0 4px;
}
.plus {
    width: 9px;
    height: 9px;
    border: 1px solid #848484;
    line-height: 7px;
    font-size: 9px;
    text-align: center;
    color: black;
}
.page .scroll {
    border-top: 2px solid #716f64;
    height: 140px;
}
.box {
    height: 33px;
    margin-top: 6px;
    border: 1px solid;
    border-color: white #716f64 #716f64 white;
}

/* Status line */
.status {
    display: flex;
    height: 23px;
    padding: 1px 0 0 1px;
    border-bottom: 1px solid #aca899;
    border-top: 1px solid white;
}
.status button {
    width: 29px;
    height: 19px;
    flex: none;
}
.status button svg {
    width: 18px;
    height: 14px;
}
.status p {
    width: 382px;
    line-height: 17px;
    padding-left: 1px;
    white-space: nowrap;
}
.position {
    flex: 1;
    height: 6px;
    margin: 7px 20px 0;
    border: 1px solid black;
    background-color: #906c7c;
}

/* Controls under the graph */
.controls {
    display: flex;
    gap: 4px;
    height: 100px;
    align-items: flex-end;
    padding-bottom: 1px;
    font-size: 10px;
    font-weight: bold;
}
.blank {
    width: 343px;
    height: 99px;
    border-right: 1px solid #aca899;
}
.nav {
    display: grid;
    grid-template-columns: 48px 48px;
    grid-template-rows: repeat(4, 22px);
    gap: 3px;
}
.nav svg {
    width: 10px;
    height: 8px;
}
.nav .pink {
    background-color: #ff8080;
}
.nav .lemon {
    background-color: #ffff80;
}
.fill {
    grid-column: span 2;
    display: grid;
    grid-template-columns: 1fr 1fr 1fr;
    gap: 3px;
}
.values {
    display: grid;
    grid-template-columns: repeat(5, 59px);
    grid-template-rows: repeat(4, 22px);
    gap: 3px;
    text-align: center;
}
.values.three {
    grid-template-columns: repeat(3, 59px);
}
.head {
    height: 17px;
    line-height: 13px;
    border: 1px solid;
    border-color: #aca899 white white #aca899;
}
.controls output {
    display: block;
    height: 19px;
    line-height: 16px;
    color: white;
    background-color: black;
    border: 1px solid;
    border-color: #aca899 white white #aca899;
    text-align: center;
    font-size: 11px;
}
.controls output.red {
    color: red;
}
.controls output.yellow {
    color: yellow;
}
.controls button:disabled {
    color: #aca899;
}
.spin {
    width: 27px;
    display: grid;
    grid-template-rows: 18px 18px 20px 18px 18px;
    gap: 2px;
}
.spin svg, .zoom svg {
    width: 8px;
    height: 8px;
}
.track {
    display: flex;
    align-items: flex-end;
    background-color: #f6f4ec;
}
.track span {
    flex: 1;
    height: 7px;
    background-color: #ece9d8;
    border: 1px solid;
    border-color: white #716f64 #716f64 white;
}
.controls .spin output {
    height: 18px;
    line-height: 14px;
    color: black;
    background: none;
}
.keys {
    display: grid;
    grid-template-columns: 1fr 1fr;
    grid-template-rows: repeat(5, 18px);
    gap: 2px;
}
.controls .keys output {
    height: 18px;
}
.full {
    grid-column: span 2;
}
.chk {
    width: 108px;
}
.bits {
    width: 94px;
}
.zoom {
    display: grid;
    grid-template-columns: 19px 1fr 19px;
    gap: 2px;
}
.keys.last {
    width: 52px;
    margin-left: 3px;
    padding-right: 2px;
    border-right: 1px solid #aca899;
    grid-template-columns: 1fr;
}
.keys .hot {
    background-color: #dc1400;
    color: #400000;
}

/* Table windows */
.dialog {
    position: absolute;
    border: solid #7186dc;
    border-width: 0 4px 4px;
    background-color: #ece9d8;
}
.dialog.first {
    left: 695px;
    right: 2px;
    top: 56px;
}
.dialog.second {
    left: 635px;
    right: 19px;
    top: 108px;
}
.dialog-title {
    display: flex;
    align-items: center;
    justify-content: space-between;
    height: 24px;
    margin: 0 -4px;
    padding: 2px 6px 0 4px;
    background: linear-gradient(#6c84d8 0, #98b0ec 3px, #7a94dc 8px, #84a4e8);
}
.dialog-title h3 {
    color: #d8e4f8;
    font-weight: bold;
    font-size: 11px;
    white-space: nowrap;
}
.dialog-tools {
    display: flex;
    align-items: center;
    height: 28px;
    padding: 0 1px 0 0;
}
.dialog.second .dialog-tools {
    height: 30px;
}
.dialog-tools button {
    width: 23px;
    height: 22px;
    font-size: 15px;
    align-self: flex-start;
    flex: none;
}
.dialog-tools em {
    font-family: "Liberation Sans", sans-serif;
    font-size: 12px;
    font-weight: bold;
}
.dialog-tools button:nth-child(4) {
    width: 27px;
}
.dialog-tools label {
    margin-left: auto;
    padding-right: 6px;
}
.combo {
    position: relative;
    margin-top: 5px;
}
.combo select {
    display: block;
    width: 146px;
    height: 20px;
    appearance: none;
    border: solid;
    border-width: 2px 1px 1px 2px;
    border-color: #716f64 white white #716f64;
    border-radius: 0;
    background-color: white;
    padding: 0 0 0 1px;
    font: inherit;
    color: black;
}
.combo::before {
    content: "";
    position: absolute;
    right: 2px;
    top: 2px;
    width: 15px;
    height: 16px;
    background-color: #ece9d8;
    border: 1px solid;
    border-color: white #716f64 #716f64 white;
    pointer-events: none;
}
.combo::after {
    content: "";
    position: absolute;
    right: 6px;
    top: 8px;
    border: solid transparent;
    border-width: 4px 4px 0;
    border-top-color: black;
    pointer-events: none;
}
.dialog-row {
    display: flex;
    justify-content: space-between;
    padding: 0 4px 0 1px;
}
.grid {
    flex: 1;
    display: flex;
    justify-content: space-between;
    background-color: white;
    border: 1px solid;
    border-color: #716f64 white white #716f64;
}
.dialog-row .section {
    margin: 5px 0 0 9px;
}
.section {
    background-color: black;
}
.rule {
    stroke: #906c7c;
}
.line-r, .line-y {
    fill: none;
    shape-rendering: crispEdges;
}
.line-r {
    stroke: red;
    marker: url(#dotR);
}
.line-y {
    stroke: yellow;
    marker: url(#dotY);
}
.dialog.second .grid {
    height: 203px;
}
table {
    width: 656px;
    align-self: flex-start;
    table-layout: fixed;
    border-spacing: 0;
    font-family: "Liberation Sans", sans-serif;
    font-size: 10px;
}
th, td {
    height: 19px;
    padding: 0 0 0 2px;
    line-height: 14px;
    text-align: left;
    white-space: nowrap;
    border: solid #c0c0c8;
    border-width: 0 1px 1px 0;
}
th {
    font-weight: normal;
    background-color: #ece9d8;
    border-color: black;
    box-shadow: inset 1px 1px white, inset -1px -1px #aca899;
}
.percent td {
    color: #0c500c;
}
td.m {
    box-shadow: inset 0 0 0 1px red;
}
td.sel, .percent td.sel {
    background-color: #316ac5;
    color: white;
}
.scroll {
    width: 18px;
    display: flex;
    flex-direction: column;
    padding: 0 1px;
    background-color: #f4f3ee;
}
.scroll button, .scroll span {
    height: 16px;
    flex: none;
    border: 1px solid #a8bcf0;
    border-radius: 2px;
    background-color: #c4d4fc;
}
.scroll span {
    margin-top: auto;
    margin-bottom: 1px;
}
.scroll svg {
    width: 10px;
    height: 10px;
}
.bottom {
    padding: 3px 1px 2px 3px;
}
.dialog-row.bottom .section {
    margin: 5px 0 0;
}
.ok {
    width: 105px;
    height: 35px;
    margin-top: 6px;
    gap: 4px;
}
.ok svg {
    width: 14px;
    height: 14px;
}
```
